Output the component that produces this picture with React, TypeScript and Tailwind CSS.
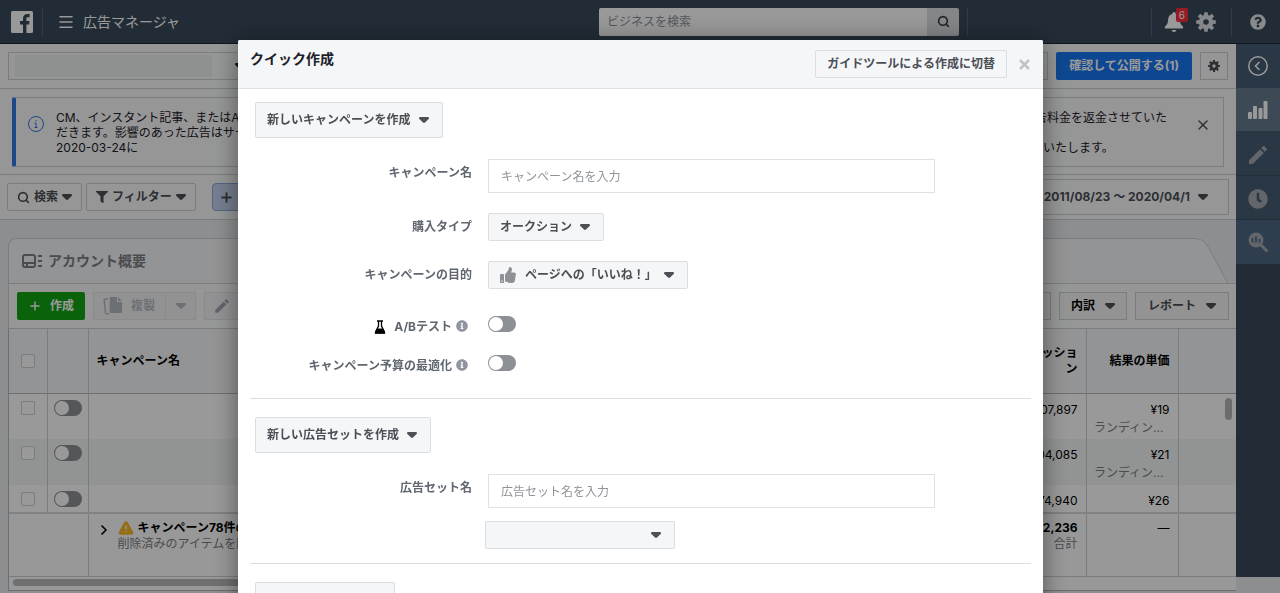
import { AlertTriangle, ChevronRight, Menu, Plus, Search, X } from "lucide-react";
import type { ReactNode } from "react";
import { FaClock, FaFilter, FaInfoCircle, FaQuestionCircle, FaThumbsUp } from "react-icons/fa";
import { MdEdit } from "react-icons/md";

const Caret = ({ className = "" }: { className?: string }) => (
  <svg viewBox="0 0 10 6" className={`h-1.5 w-2.5 shrink-0 fill-current ${className}`}>
    <path d="M0 1.2Q0 0 1.2 0H8.8Q10 0 10 1.2Q10 1.7 9.6 2.1L6 5.6Q5 6.4 4 5.6L.4 2.1Q0 1.7 0 1.2Z" />
  </svg>
);

const Gear = ({ className }: { className: string }) => (
  <svg viewBox="0 0 20 20" className={className}>
    <circle cx="10" cy="10" r="5" fill="none" stroke="currentColor" strokeWidth="4.4" />
    {[0, 45, 90, 135, 180, 225, 270, 315].map((angle) => (
      <path key={angle} d="M7.900 4L8.300 .2H11.700L12.100 4Z" fill="currentColor" transform={`rotate(${angle} 10 10)`} />
    ))}
  </svg>
);

interface SelectProps {
  id?: string;
  label: string;
  value: string;
  className: string;
  icon?: ReactNode;
}

const Select = ({ id, label, value, className, icon }: SelectProps) => (
  <span className="relative inline-flex items-center text-[#4b4f56]">
    {icon}
    <select
      id={id}
      aria-label={label}
      className={`appearance-none rounded-xs border border-[#dadde1] bg-[#f5f6f7] pr-[30px] font-bold ${className}`}
    >
      <option>{value}</option>
    </select>
    <Caret className="pointer-events-none absolute right-3.5" />
  </span>
);

const Toggle = ({ id, label }: { id?: string; label: string }) => (
  <input
    id={id}
    type="checkbox"
    role="switch"
    aria-label={label}
    className="block h-4 w-7 shrink-0 appearance-none rounded-full bg-[#8d9094] p-px before:block before:size-3.5 before:rounded-full before:bg-white checked:before:ml-3"
  />
);

const CheckBox = ({ label }: { label: string }) => (
  <input
    type="checkbox"
    aria-label={label}
    className="mx-auto block size-3.5 appearance-none rounded-xs border border-[#ccd0d5] bg-white"
  />
);

const TopBar = () => (
  <header className="flex h-11 items-center border-b border-[#1c2733] bg-[#3a4a5b] text-white">
    <a href="#" aria-label="Facebook" className="ml-[11px]">
      <svg viewBox="0 0 22 22" className="size-[22px]">
        <rect width="22" height="22" rx="1.5" fill="#fff" />
        <path
          d="M12 22v-8.500H9V10h3V7.500C12 4.600 13.700 3 16.400 3c1 0 1.900.1 2.200.1v3.100H17c-1.300 0-1.600.7-1.600 1.600V10h3.100l-.4 3.500h-2.700V22z"
          fill="#3a4a5b"
        />
      </svg>
    </a>
    <span className="mr-3.5 ml-[9px] h-7 w-px bg-[#566573]" />
    <button aria-label="メニュー">
      <Menu size={18} strokeWidth={2} />
    </button>
    <h1 className="ml-2 text-sm">広告マネージャ</h1>
    <form className="ml-auto flex h-7 w-[360px] overflow-hidden rounded-xs">
      <input
        type="search"
        aria-label="ビジネスを検索"
        placeholder="ビジネスを検索"
        className="min-w-0 flex-1 bg-white px-2 text-xs placeholder:text-[#8d949e]"
      />
      <button type="button" aria-label="検索" className="flex w-8 items-center justify-center bg-[#dcdfe3] text-[#33383f]">
        <Search size={13} strokeWidth={3} />
      </button>
    </form>
    <span className="ml-2 h-7 w-px bg-[#566573]" />
    <div className="ml-[183px] flex h-7 items-center gap-3 border-l border-[#566573] pl-3">
      <button aria-label="お知らせ" className="relative">
        <svg viewBox="0 0 20 20" className="size-5 fill-current">
          <path d="M10 0a1.800 1.800 0 011.800 1.900C14.500 2.700 15.800 4.800 15.900 7.500C16 11.500 17 12.500 18.500 14Q19.500 15.200 19 16.500H1Q.5 15.200 1.500 14C3 12.500 4 11.500 4.100 7.500C4.200 4.800 5.500 2.700 8.200 1.900A1.800 1.800 0 0110 0zM7.500 18h5Q12 20 10 20T7.500 18z" />
        </svg>
        <span className="absolute -top-1 -right-1 rounded-xs bg-[#fa2d3c] px-[3px] text-[10px] leading-[14px]">6</span>
      </button>
      <button aria-label="設定" className="text-[#dfe2e8]">
        <Gear className="size-5" />
      </button>
    </div>
    <div className="mr-3.5 ml-[15px] flex h-7 items-center border-l border-[#566573] pl-[18px] text-[#e4e7ea]">
      <button aria-label="ヘルプ">
        <FaQuestionCircle size={16} />
      </button>
    </div>
  </header>
);

const SideRail = () => (
  <nav className="flex h-[533px] w-11 shrink-0 flex-col bg-[#3a4a5b] text-[#a4a9b0]">
    <button aria-label="閉じる" className="flex h-11 items-center justify-center bg-[#465c72] text-white">
      <svg viewBox="0 0 20 20" className="size-5 fill-none stroke-current">
        <circle cx="10" cy="10" r="9.200" strokeWidth="1.500" />
        <path d="M11.500 6L7.500 10l4 4" strokeWidth="1.600" />
      </svg>
    </button>
    <button aria-label="グラフ" className="flex h-[43px] items-center justify-center bg-[#667a8d] text-white">
      <svg viewBox="0 0 20 18" className="h-[18px] w-5 fill-current">
        <rect y="11" width="4" height="7" rx="1" />
        <rect x="5" y="5" width="4" height="13" rx="1" />
        <rect x="10.500" y="7" width="4" height="11" rx="1" />
        <rect x="15.500" width="4" height="18" rx="1" />
      </svg>
    </button>
    <button
      aria-label="編集"
      className="flex h-[45px] items-center justify-center border-b border-[#3a4f63] bg-[#465c72] pt-1"
    >
      <MdEdit size={24} />
    </button>
    <button aria-label="履歴" className="flex h-11 items-center justify-center border-b border-[#3a4f63] bg-[#465c72] pt-0.5">
      <FaClock size={20} />
    </button>
    <button aria-label="分析" className="flex h-11 items-center justify-center bg-[#4d6882]">
      <svg viewBox="0 0 20 20" className="size-5">
        <path d="M12 12l6.500 6.500" stroke="currentColor" strokeWidth="3" strokeLinecap="round" />
        <circle cx="8" cy="8" r="7.500" fill="currentColor" />
        <path d="M4.500 6v4.500M8 4.500v6M11.500 7v3.500" stroke="#4d6882" strokeWidth="1.800" />
      </svg>
    </button>
  </nav>
);

const AccountRow = () => (
  <div className="flex h-[45px] items-center gap-2 border-b border-[#ccd0d5] bg-[#fafbfb] px-2">
    <button
      aria-label="アカウント"
      className="flex h-7 w-[244px] items-center justify-between border border-[#ccd0d5] px-1.5 text-[#1d2129]"
    >
      <span className="h-[22px] w-[197px] bg-[#eff1f1]" />
      <Caret />
    </button>
    <button aria-label="変更を破棄" className="ml-auto h-7 w-24 border border-[#ccd0d5]" />
    <button className="h-7 rounded-xs bg-[#1877f2] px-[13px] font-bold text-white">確認して公開する(1)</button>
    <button aria-label="設定" className="flex size-7 items-center justify-center border border-[#ccd0d5] text-[#4b4f56]">
      <Gear className="size-3" />
    </button>
  </div>
);

const Notice = () => (
  <div className="border-b border-[#ccd0d5] bg-[#fafbfb] pt-2 pr-3 pb-[7px] pl-3">
    <div className="flex h-[70px] items-center rounded-l-xs border border-l-4 border-[#ccd0d5] border-l-[#3578e5] pl-3">
      <svg viewBox="0 0 16 16" className="mb-4 size-4 shrink-0 fill-none stroke-[#3578e5]">
        <circle cx="8" cy="8" r="7.500" />
        <path d="M8 7v4.500M6.500 7H8M6.500 11.500h3M8 4v1.300" />
      </svg>
      <div className="ml-3 leading-[15px] text-[#1d2129]">
        <p>CM、インスタント記事、またはAudience</p>
        <p>だきます。影響のあった広告はサービス</p>
        <p>2020-03-24に</p>
      </div>
      <div className="ml-auto leading-[15px] text-[#1d2129]">
        <p>告料金を返金させていた</p>
        <br />
        <p className="pl-2">いたします。</p>
      </div>
      <button aria-label="お知らせを閉じる" className="mr-3 mb-3.5 ml-7 text-[#4b4f56]">
        <X size={16} strokeWidth={2} />
      </button>
    </div>
  </div>
);

const FilterRow = () => (
  <div className="flex h-[45px] items-center gap-1 border-b border-[#ccd0d5] bg-[#fafbfb] pr-[7px] pl-[7px] font-bold text-[#4b4f56]">
    <button className="flex h-7 items-center gap-1 rounded-xs border border-[#ccd0d5] px-[9px]">
      <Search size={13} strokeWidth={3} />
      検索
      <Caret />
    </button>
    <button className="flex h-7 items-center gap-1 rounded-xs border border-[#ccd0d5] px-[9px]">
      <FaFilter size={12} />
      フィルター
      <Caret />
    </button>
    <button
      aria-label="フィルターを追加"
      className="ml-3 flex h-7 w-20 items-center rounded-sm border border-[#8ba6d8] bg-[#c3d3ee] pl-1.5"
    >
      <Plus size={15} strokeWidth={3} />
    </button>
    <button className="ml-auto flex h-9 items-center gap-2 border border-[#ccd0d5] pr-5 pl-4">
      2011/08/23 〜 2020/04/1
      <Caret />
    </button>
  </div>
);

const Tab = () => (
  <div className="flex bg-[#ebedf0] pt-[18px] pl-2">
    <div className="flex h-[46px] flex-1 items-center rounded-tl-lg border-t border-b border-l border-[#ccd0d5] bg-[#f6f7f8] pl-[13px] text-sm font-bold text-[#7c7f84]">
      <svg viewBox="0 0 20 14" className="mr-1.5 h-3.5 w-5 fill-none stroke-current stroke-2">
        <rect x="1" y="1" width="12" height="12" rx="2" />
        <path d="M1 9h12M16 2h4M16 7h4M16 12h4M4 11h2" />
      </svg>
      アカウント概要
    </div>
    <svg viewBox="0 0 44 46" className="h-[46px] w-11">
      <path d="M0 0H2Q11 0 15 7L36 45.500H0Z" fill="#f6f7f8" />
      <path d="M0 .5H2Q11 .5 15 7L36 45.500M0 45.500H44" fill="none" stroke="#ccd0d5" />
    </svg>
  </div>
);

const ToolBar = () => (
  <div className="ml-2 flex h-[45px] items-center border-b border-l border-[#ccd0d5] bg-[#fafbfb] pr-[7px] pl-2 font-bold">
    <button className="flex h-7 items-center gap-2 rounded-xs bg-[#12a312] px-[11px] text-white">
      <Plus size={14} strokeWidth={2.5} />
      作成
    </button>
    <div className="ml-2 flex h-7 border border-[#e4e6ea] bg-[#f3f4f6] text-[#b5bac2]">
      <button className="flex items-center gap-2 pr-2.5 pl-[9px]">
        <svg viewBox="0 0 20 18" className="h-[18px] w-5">
          <path d="M7 0h7v5h5v10a1 1 0 01-1 1H7.500a1 1 0 01-1-1zM15 0l4 4h-4z" fill="currentColor" />
          <path d="M5 2H2.500Q1 2 1.200 3.500L2.500 15.500Q2.700 17 4 17H6" fill="none" stroke="currentColor" strokeWidth="1.500" />
        </svg>
        複製
      </button>
      <button aria-label="複製オプション" className="flex w-[30px] items-center justify-center border-l border-[#e4e6ea]">
        <Caret />
      </button>
    </div>
    <button
      aria-label="編集"
      className="ml-2 flex h-7 w-24 items-center border border-[#e4e6ea] bg-[#f3f4f6] pl-2 text-[#a2a7af]"
    >
      <MdEdit size={18} />
    </button>
    <button aria-label="ルール" className="ml-auto h-7 w-24 border border-[#ccd0d5] bg-[#f5f6f7]" />
    <button className="ml-2 flex h-7 items-center gap-2.5 border border-[#ccd0d5] bg-[#f5f6f7] px-[11px]">
      内訳
      <Caret className="text-[#4b4f56]" />
    </button>
    <button className="ml-2 flex h-7 items-center gap-2.5 border border-[#ccd0d5] bg-[#f5f6f7] px-3 text-[#4b4f56]">
      レポート
      <Caret />
    </button>
  </div>
);

const rows = [
  { impressions: "107,897", cost: "¥19", note: "ランディン...", bg: "bg-white" },
  { impressions: "104,085", cost: "¥21", note: "ランディン...", bg: "bg-[#f3f5f5]" },
  { impressions: "74,940", cost: "¥26", note: "", bg: "bg-white" },
];

const CampaignTable = () => (
  <div className="ml-2 border-b border-l border-[#b5b9be] bg-[#fdfdfd]">
    <table className="w-full table-fixed border-collapse">
      <colgroup>
        <col className="w-[38px]" />
        <col className="w-[41px]" />
        <col />
        <col className="w-[120px]" />
        <col className="w-[92px]" />
        <col className="w-[58px]" />
      </colgroup>
      <thead>
        <tr className="h-16 border-b border-[#b5b9be] bg-[#f6f7f8]">
          <th className="border-r border-[#ccd0d5]">
            <CheckBox label="すべて選択" />
          </th>
          <th className="border-r border-[#ccd0d5]" />
          <th className="border-r border-[#ccd0d5] pl-2 text-left">キャンペーン名</th>
          <th className="border-r border-[#ccd0d5] pr-2 text-right">
            インプレッショ
            <br />ン
          </th>
          <th className="border-r border-[#ccd0d5] pr-2 text-right">結果の単価</th>
          <th />
        </tr>
      </thead>
      <tbody>
        {rows.map((row, i) => (
          <tr key={row.impressions} className={`align-top ${row.bg} ${row.note ? "h-[46px]" : "h-7"}`}>
            <td className="border-r border-[#ccd0d5] pt-[7px]">
              <CheckBox label={`行${i + 1}を選択`} />
            </td>
            <td className="border-r border-[#ccd0d5] pt-1.5 pl-1.5">
              <Toggle label={`行${i + 1}の配信`} />
            </td>
            <td className="border-r border-[#ccd0d5]" />
            <td className="border-r border-[#ccd0d5] pt-[7px] pr-2 text-right leading-[18px]">{row.impressions}</td>
            <td className="border-r border-[#ccd0d5] pt-[7px] pr-2 text-right leading-[18px]">
              {row.cost}
              {row.note && <p className="pr-1.5 text-[#7c7f84]">{row.note}</p>}
            </td>
            <td>{i === 0 && <span className="mt-1 mr-1 ml-auto block h-[22px] w-[7px] rounded-full bg-[#b5b5b5]" />}</td>
          </tr>
        ))}
      </tbody>
      <tfoot>
        <tr className="h-[63px] border-t-2 border-b border-t-[#d6d7d9] border-b-[#ccd0d5] align-top">
          <td colSpan={2} className="border-r border-[#ccd0d5]" />
          <td className="border-r border-[#ccd0d5] pt-1.5">
            <div className="flex items-start pl-[7px]">
              <ChevronRight size={16} strokeWidth={2.5} className="mt-0.5 mr-1.5" />
              <div className="leading-4">
                <p className="flex items-center gap-1 font-bold">
                  <AlertTriangle
                    size={16}
                    className="fill-[#f7b928] text-[#f7b928] [&>path:not(:first-child)]:stroke-white"
                  />
                  キャンペーン78件の結果
                </p>
                <p className="text-[#7c7f84]">削除済みのアイテムを除く</p>
              </div>
            </div>
          </td>
          <td className="border-r border-[#ccd0d5] pt-1.5 pr-2 text-right leading-4">
            <p className="font-bold">2,236</p>
            <p className="text-[#7c7f84]">合計</p>
          </td>
          <td className="border-r border-[#ccd0d5] pt-1.5 pr-2 text-right leading-4">—</td>
          <td />
        </tr>
      </tfoot>
    </table>
    <div className="px-1 pt-0.5 pb-1">
      <div className="h-[7px] w-3/4 rounded-full bg-[#b9b9b9]" />
    </div>
  </div>
);

interface FieldProps {
  id: string;
  label: string;
  children: ReactNode;
  before?: ReactNode;
  info?: boolean;
}

const Field = ({ id, label, children, before, info }: FieldProps) => (
  <div className="grid grid-cols-[217px_1fr] gap-4">
    <div className={`flex items-center justify-end text-[#606770] ${info ? "h-[22px] pr-1" : "h-7"}`}>
      {before}
      <label htmlFor={id} className="font-bold">
        {label}
      </label>
      {info && <FaInfoCircle size={12} className="mb-0.5 ml-1 text-[#90959f]" />}
    </div>
    <div>{children}</div>
  </div>
);

const QuickCreateDialog = () => (
  <section
    role="dialog"
    aria-label="クイック作成"
    className="min-h-screen w-full max-w-[805px] rounded-t-xs bg-white shadow-[0_2px_26px_rgba(0,0,0,0.45)]"
  >
    <div className="flex h-[49px] items-center rounded-t-xs border-b border-[#e0e1e3] bg-[#f5f6f7] pr-[11px] pl-3">
      <h2 className="mb-2.5 text-sm font-bold text-[#1d2129]">クイック作成</h2>
      <button className="ml-auto h-7 rounded-xs border border-[#dadde1] px-[11px] font-bold text-[#4b4f56]">
        ガイドツールによる作成に切替
      </button>
      <button aria-label="閉じる" className="ml-2.5 text-[#bec3c9]">
        <X size={15} strokeWidth={4} />
      </button>
    </div>

    <div className="mr-3 ml-3 border-b border-[#dadde1] pt-[13px] pb-[21px] pl-[5px]">
      <Select label="キャンペーンの作成方法" value="新しいキャンペーンを作成" className="h-9 pl-[11px]" />
      <div className="mt-[21px] flex flex-col gap-5">
        <Field id="campaign-name" label="キャンペーン名">
          <input
            id="campaign-name"
            placeholder="キャンペーン名を入力"
            className="block h-[34px] w-full max-w-[447px] border border-[#dfe1e4] px-3 placeholder:text-[#909498]"
          />
        </Field>
        <Field id="buying-type" label="購入タイプ">
          <Select id="buying-type" label="購入タイプ" value="オークション" className="h-7 pl-[11px]" />
        </Field>
        <Field id="objective" label="キャンペーンの目的">
          <Select
            id="objective"
            label="キャンペーンの目的"
            value="ページへの「いいね！」"
            className="h-7 w-[200px] pl-9"
            icon={<FaThumbsUp size={16} className="pointer-events-none absolute left-3 text-[#8d9094]" />}
          />
        </Field>
      </div>
      <div className="mt-[27px] flex flex-col gap-[17px]">
        <Field
          id="ab-test"
          label="A/Bテスト"
          info
          before={
            <svg viewBox="0 0 12 14" className="mr-2 h-3.5 w-3">
              <path d="M3 1h6M4.500 1v5L1.500 12v1h9v-1L7.500 6V1" fill="none" stroke="#000" strokeWidth="1.300" />
              <path d="M3.500 8.500h5L11 12v1.500H1V12z" />
            </svg>
          }
        >
          <Toggle id="ab-test" label="A/Bテスト" />
        </Field>
        <Field id="budget" label="キャンペーン予算の最適化" info>
          <Toggle id="budget" label="キャンペーン予算の最適化" />
        </Field>
      </div>
    </div>

    <div className="mr-3 ml-3 border-b border-[#dadde1] pt-[18px] pb-3.5 pl-[5px]">
      <Select label="広告セットの作成方法" value="新しい広告セットを作成" className="h-9 pl-[11px]" />
      <div className="mt-[21px] flex flex-col gap-[13px]">
        <Field id="adset-name" label="広告セット名">
          <input
            id="adset-name"
            placeholder="広告セット名を入力"
            className="block h-[34px] w-full max-w-[447px] border border-[#dfe1e4] px-3 placeholder:text-[#909498]"
          />
        </Field>
        <div className="pl-[230px]">
          <Select label="ページ" value="" className="h-7 w-[190px]" />
        </div>
      </div>
    </div>

    <div className="pt-[18px] pl-[17px]">
      <Select label="広告の作成方法" value="" className="h-9 w-[140px]" />
    </div>
  </section>
);

export default function App() {
  return (
    <div className="min-h-screen bg-[#ebedf0] font-['Inter','Noto_Sans_CJK_JP',sans-serif] text-xs text-black">
      <TopBar />
      <div className="flex items-start">
        <main className="min-w-0 flex-1">
          <AccountRow />
          <Notice />
          <FilterRow />
          <Tab />
          <ToolBar />
          <CampaignTable />
        </main>
        <SideRail />
      </div>
      <div className="fixed inset-0 flex items-start justify-center overflow-hidden bg-black/40 pt-10 pl-px">
        <QuickCreateDialog />
      </div>
    </div>
  );
}
